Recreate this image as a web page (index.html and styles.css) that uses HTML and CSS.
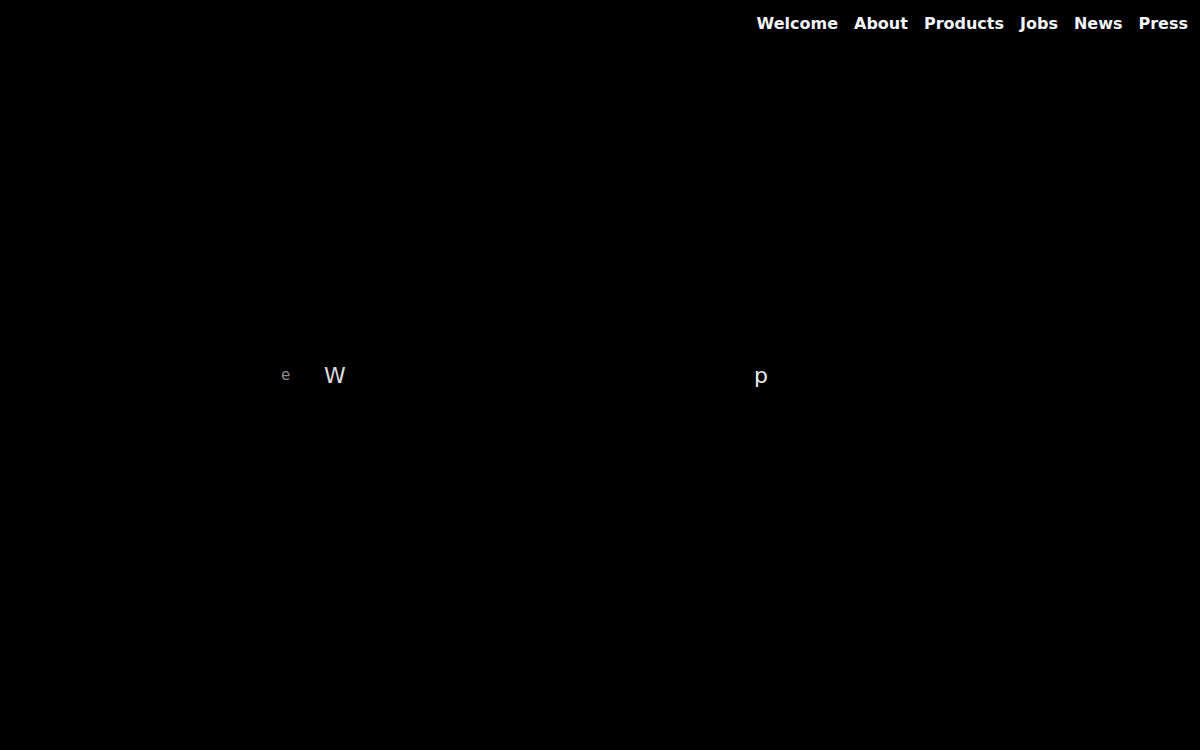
FILE: index.html
```html
<!DOCTYPE html>
<html>
<head>
<meta charset="utf-8">
<link rel="stylesheet" href="styles.css">
</head>
<body>
<nav class="nav">
  <a href="#">Welcome</a>
  <a href="#">About</a>
  <a href="#">Products</a>
  <a href="#">Jobs</a>
  <a href="#">News</a>
  <a href="#">Press</a>
</nav>
<main class="stage">
  <span class="letter l-e">e</span>
  <span class="letter l-w">W</span>
  <span class="letter l-p">p</span>
</main>
</body>
</html>
```

FILE: styles.css
```css
html, body {
  margin: 0;
  padding: 0;
  background: #000;
  height: 100%;
  overflow: hidden;
}
body {
  font-family: "DejaVu Sans", sans-serif;
  color: #fff;
}
.nav {
  display: flex;
  justify-content: flex-end;
  gap: 16px;
  padding: 13px 12px 0 0;
}
.nav a {
  color: #f4f6fb;
  text-decoration: none;
  font-weight: bold;
  font-size: 16px;
  line-height: 22px;
}
.stage {
  position: relative;
  height: 700px;
}
.letter {
  position: absolute;
  line-height: 1;
}
.l-e {
  left: 281px;
  top: 333px;
  font-size: 15px;
  color: #8a8a8a;
}
.l-w {
  left: 324px;
  top: 330px;
  font-size: 22px;
  color: #dcdcdc;
}
.l-p {
  left: 754px;
  top: 330px;
  font-size: 22px;
  color: #ececec;
}
```
